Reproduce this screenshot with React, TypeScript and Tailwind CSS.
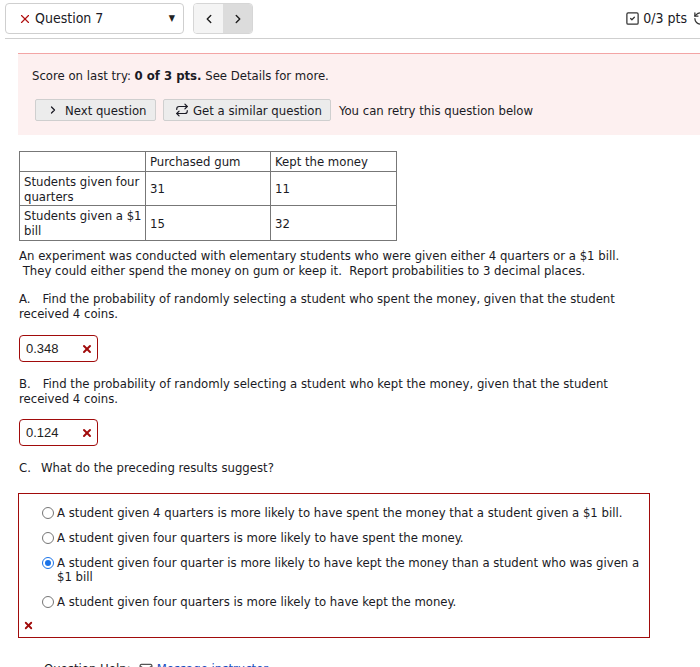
import { X, ChevronLeft, ChevronRight, ChevronRight as Chev, Repeat, SquareCheck, RotateCcw, Mail } from 'lucide-react'

const font = { fontFamily: '"DejaVu Sans Condensed", "DejaVu Sans", sans-serif' }

const options = [
  { text: 'A student given 4 quarters is more likely to have spent the money that a student given a $1 bill.', checked: false },
  { text: 'A student given four quarters is more likely to have spent the money.', checked: false },
  { text: 'A student given four quarter is more likely to have kept the money than a student who was given a $1 bill', checked: true },
  { text: 'A student given four quarters is more likely to have kept the money.', checked: false },
]

function AnswerBox({ value }: { value: string }) {
  return (
    <div className="flex h-[27px] w-[79px] items-center justify-between rounded-[4px] border border-[#a10b0b] pl-[6px] pr-[4px]">
      <span className="text-[13px] text-[#222]" style={{ fontFamily: '"Liberation Sans", Arial, sans-serif' }}>{value}</span>
      <X className="h-[12px] w-[12px] text-[#a10b0b]" strokeWidth={4} />
    </div>
  )
}

export default function App() {
  return (
    <div className="h-[667px] w-[700px] overflow-hidden bg-white text-[13px] leading-[15px] text-[#1a1a24]" style={font}>
      {/* Header */}
      <div className="ml-[5px] flex h-[39px] items-start border-b border-[#cfcfcf] pt-[3px]">
        <div className="flex h-[31px] w-[179px] items-center rounded-[4px] border border-[#cfcfcf] pl-[12px] pr-[8px]">
          <X className="h-[14px] w-[14px] text-[#b01010]" strokeWidth={2} />
          <span className="ml-[3px] text-[14px]">Question 7</span>
          <span className="ml-auto text-[9px] text-[#222]">▼</span>
        </div>
        <div className="ml-[9px] flex h-[31px] w-[60px] overflow-hidden rounded-[4px] border border-[#d6d6d6]">
          <div className="flex w-[30px] items-center justify-center bg-[#f4f4f4]">
            <ChevronLeft className="h-[14px] w-[14px] text-[#222]" strokeWidth={2.5} />
          </div>
          <div className="flex w-[30px] items-center justify-center bg-[#dcdcdc]">
            <ChevronRight className="h-[14px] w-[14px] text-[#222]" strokeWidth={2.5} />
          </div>
        </div>
        <div className="ml-auto mr-[-8px] flex h-[31px] items-center">
          <SquareCheck className="h-[15px] w-[15px] text-[#333]" strokeWidth={2} />
          <span className="ml-[3px] text-[14px]">0/3 pts</span>
          <RotateCcw className="ml-[6px] h-[15px] w-[15px] text-[#333]" strokeWidth={2} />
        </div>
      </div>

      <div className="pl-[18px]">
        {/* Score notice */}
        <div className="mt-[14px] h-[82px] border-t border-[#f3a5a5] bg-[#fdf0f0] pl-[14px] pt-[14px]">
          <div>
            Score on last try: <span className="font-bold">0 of 3 pts.</span> See Details for more.
          </div>
          <div className="mt-[16px] flex items-center">
            <button className="ml-[3px] flex h-[22px] w-[121px] items-center rounded-[2px] border border-[#cfcfcf] bg-[#ececec] pl-[11px]">
              <Chev className="h-[12px] w-[12px]" strokeWidth={2.5} />
              <span className="ml-[6px]">Next question</span>
            </button>
            <button className="ml-[7px] flex h-[22px] w-[168px] items-center rounded-[2px] border border-[#cfcfcf] bg-[#ececec] pl-[11px]">
              <Repeat className="h-[14px] w-[14px]" strokeWidth={2} />
              <span className="ml-[4px]">Get a similar question</span>
            </button>
            <span className="ml-[8px]">You can retry this question below</span>
          </div>
        </div>

        {/* Table */}
        <table className="mt-[16px] ml-[1px] border-collapse">
          <tbody>
            <tr className="h-[20px]">
              <td className="w-[126px] border border-[#777] pl-[4px] pr-[1px]"></td>
              <td className="w-[125px] border border-[#777] pl-[4px] pr-[1px]">Purchased gum</td>
              <td className="w-[126px] border border-[#777] pl-[4px] pr-[1px]">Kept the money</td>
            </tr>
            <tr className="h-[34px]">
              <td className="border border-[#777] pl-[4px] pr-[1px]">Students given four quarters</td>
              <td className="border border-[#777] pl-[4px] pr-[1px]">31</td>
              <td className="border border-[#777] pl-[4px] pr-[1px]">11</td>
            </tr>
            <tr className="h-[35px]">
              <td className="border border-[#777] pl-[4px] pr-[1px]">Students given a $1 bill</td>
              <td className="border border-[#777] pl-[4px] pr-[1px]">15</td>
              <td className="border border-[#777] pl-[4px] pr-[1px]">32</td>
            </tr>
          </tbody>
        </table>

        <p className="mt-[7px] ml-[1px] pr-[60px]">
          An experiment was conducted with elementary students who were given either 4 quarters or a $1 bill.
          <br />
          &nbsp;They could either spend the money on gum or keep it.&nbsp; Report probabilities to 3 decimal places.
        </p>

        <p className="mt-[13px] ml-[1px] pr-[80px]">
          A.<span className="inline-block w-[12px]" />Find the probability of randomly selecting a student who spent the money, given that the student received 4 coins.
        </p>
        <div className="mt-[14px] ml-[1px]">
          <AnswerBox value="0.348" />
        </div>

        <p className="mt-[14px] ml-[1px] pr-[80px]">
          B.<span className="inline-block w-[12px]" />Find the probability of randomly selecting a student who kept the money, given that the student received 4 coins.
        </p>
        <div className="mt-[13px] ml-[1px]">
          <AnswerBox value="0.124" />
        </div>

        <p className="mt-[14px] ml-[1px]">
          C.<span className="inline-block w-[10px]" />What do the preceding results suggest?
        </p>

        {/* Choices */}
        <div className="mt-[18px] h-[145px] w-[632px] border border-[#a10b0b] pl-[23px] pr-[2px] pt-[12px]">
          {options.map((o, i) => (
            <label key={i} className="mb-[11px] flex items-start">
              <span
                className={
                  o.checked
                    ? 'mt-[1px] flex h-[12px] w-[12px] shrink-0 items-center justify-center rounded-full border border-[#1a73e8] bg-white'
                    : 'mt-[1px] flex h-[12px] w-[12px] shrink-0 items-center justify-center rounded-full border border-[#767676] bg-white'
                }
              >
                {o.checked && <span className="h-[6px] w-[6px] rounded-full bg-[#1a73e8]" />}
              </span>
              <span className="ml-[3px] leading-[14px]">{o.text}</span>
            </label>
          ))}
          <X className="-ml-[19px] mt-[6px] h-[11px] w-[11px] text-[#a10b0b]" strokeWidth={4} />
        </div>

        <div className="mt-[23px] ml-[26px] flex items-center text-[13px]">
          <span>Question Help:</span>
          <Mail className="ml-[8px] h-[14px] w-[14px] text-[#555]" />
          <span className="ml-[4px] text-[#1a4fbf]">Message instructor</span>
        </div>
      </div>
    </div>
  )
}
